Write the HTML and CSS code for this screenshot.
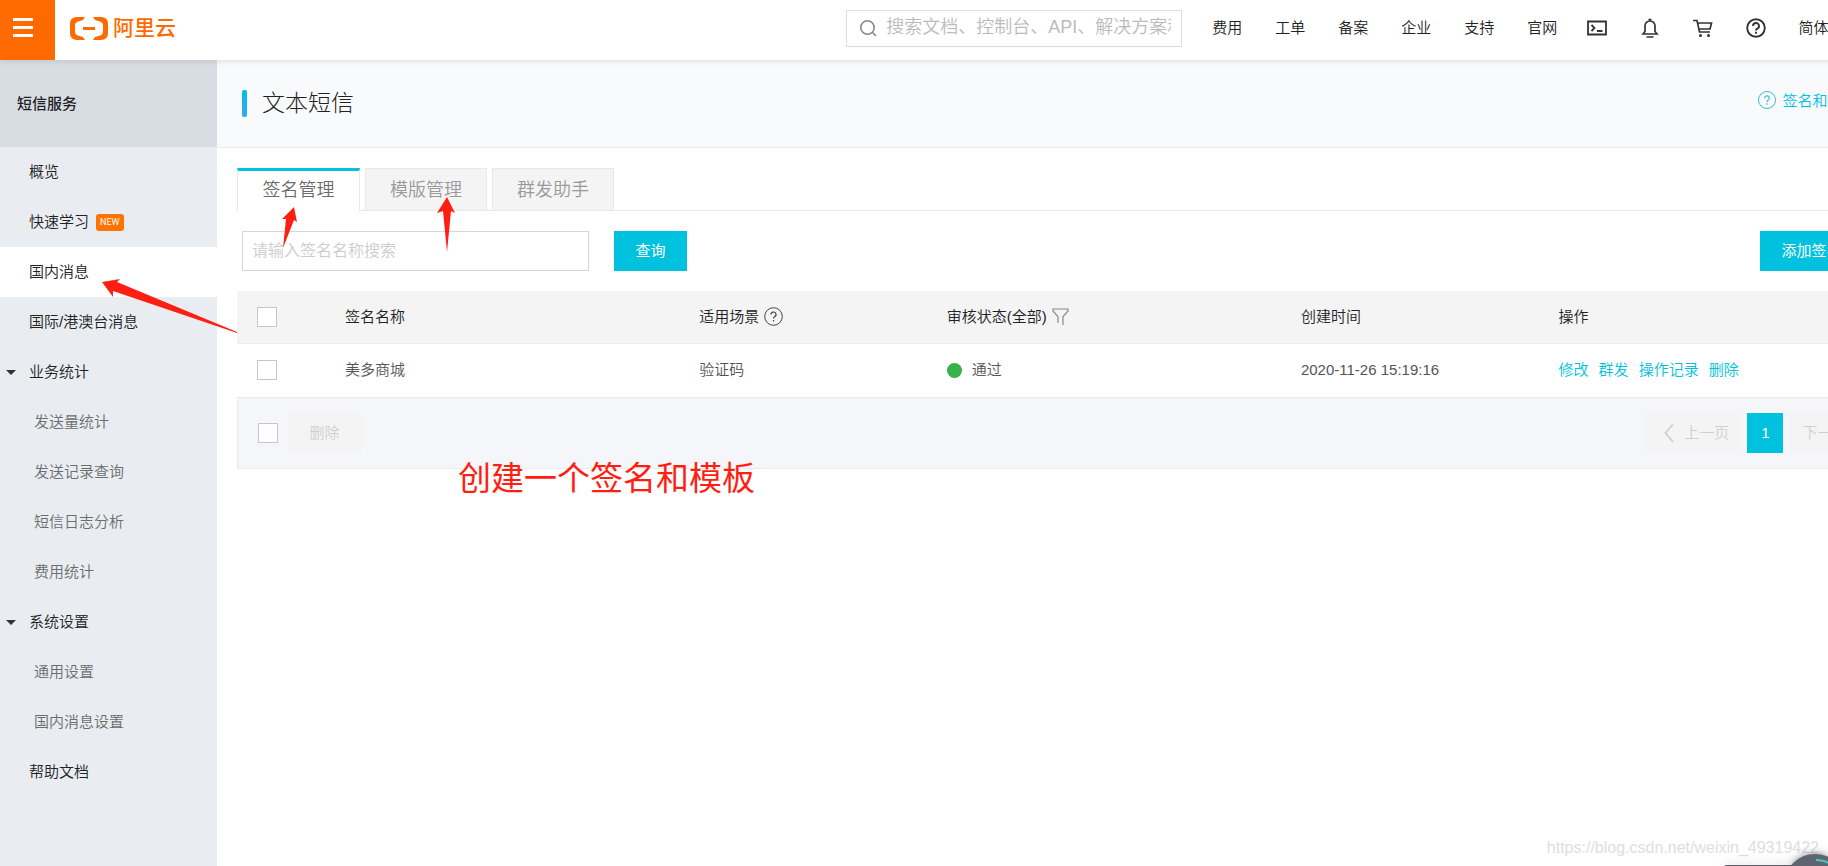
FILE: index.html
```html
<!DOCTYPE html>
<html lang="zh-CN">
<head>
<meta charset="utf-8">
<title>文本短信</title>
<link rel="stylesheet" href="styles.css">
</head>
<body>
<div class="page">
  <header class="topbar">
    <button class="menu-btn" aria-label="菜单"><svg width="20" height="20" viewBox="0 0 20 20"><path d="M0 1.500h20M0 9.500h20M0 17.500h20" stroke="#fff" stroke-width="3"/></svg></button>
    <a class="logo" href="#">
      <svg width="38" height="23" viewBox="0 0 38 23" fill="#ff6a00"><path d="M15 0H7Q0 0 0 7v9q0 7 7 7h8l-2-3-5-1.500q-3-1-3-4V8.500q0-3 3-4L13 3zM23 0h8q7 0 7 7v9q0 7-7 7h-8l2-3 5-1.500q3-1 3-4V8.500q0-3-3-4L25 3zM13 10h12v3H13z"/></svg>
      <span>阿里云</span>
    </a>
    <label class="top-search">
      <svg width="17" height="17" viewBox="0 0 17 17" fill="none" stroke="#888" stroke-width="1.600"><circle cx="7.500" cy="7.500" r="6.700"/><path d="M12 12l4 4"/></svg>
      <input type="text" aria-label="搜索" placeholder="搜索文档、控制台、API、解决方案和资源">
    </label>
    <nav class="top-nav">
      <a href="#">费用</a><a href="#">工单</a><a href="#">备案</a><a href="#">企业</a><a href="#">支持</a><a href="#">官网</a>
    </nav>
    <div class="top-icons">
      <button aria-label="命令行"><svg width="20" height="20" viewBox="0 0 20 20" fill="none" stroke="#333" stroke-width="1.800"><path d="M1 3.500h18v13H1zM4.500 7l3 3-3 3M10 13h5.500"/></svg></button>
      <button aria-label="消息"><svg width="20" height="20" viewBox="0 0 20 20" fill="none" stroke="#333" stroke-width="1.700"><path d="M3 16l2-2.500V8a5 5 0 0 1 10 0v5.500L17 16zM8.500 1.500h3M6.500 19h7"/></svg></button>
      <button aria-label="购物车"><svg width="20" height="20" viewBox="0 0 20 20" fill="none" stroke="#333" stroke-width="1.700"><path d="M0 2.500h4L6.500 14H17M4.500 5h14L17 11H6"/><circle cx="7.500" cy="17.500" r="1.500" fill="#333" stroke="none"/><circle cx="15.500" cy="17.500" r="1.500" fill="#333" stroke="none"/></svg></button>
      <button aria-label="帮助"><svg width="20" height="20" viewBox="0 0 20 20" fill="none" stroke="#333" stroke-width="1.900"><circle cx="10" cy="10" r="8.800"/><path d="M7 8a3 3 0 1 1 4.300 2.700Q10 11.300 10 12.500M10 13.800v2"/></svg></button>
    </div>
    <a class="lang" href="#">简体</a>
  </header>

  <div class="body">
    <aside class="sidebar">
      <h2 class="side-title">短信服务</h2>
      <nav class="side-nav">
        <a href="#">概览</a>
        <a href="#">快速学习<span class="new">NEW</span></a>
        <a href="#" class="active">国内消息</a>
        <a href="#">国际/港澳台消息</a>
        <a href="#" class="group">业务统计</a>
        <a href="#" class="sub">发送量统计</a>
        <a href="#" class="sub">发送记录查询</a>
        <a href="#" class="sub">短信日志分析</a>
        <a href="#" class="sub">费用统计</a>
        <a href="#" class="group">系统设置</a>
        <a href="#" class="sub">通用设置</a>
        <a href="#" class="sub">国内消息设置</a>
        <a href="#">帮助文档</a>
      </nav>
    </aside>

    <main class="main">
      <div class="title-bar">
        <h1>文本短信</h1>
        <a class="help-link" href="#"><svg width="18" height="18" viewBox="0 0 18 18" fill="none" stroke="#3bb9dc"><circle cx="9" cy="9" r="8.500"/><path d="M6.700 7.300a2.300 2.300 0 1 1 3.300 2Q9 9.900 9 11M9 12.300v1.500" stroke-width="1.200"/></svg>签名和模板规范</a>
      </div>
      <div class="content">
        <div class="tabs" role="tablist">
          <button class="tab on" role="tab" aria-selected="true">签名管理</button>
          <button class="tab" role="tab">模版管理</button>
          <button class="tab" role="tab">群发助手</button>
        </div>
        <div class="toolbar">
          <input class="name-input" type="text" aria-label="签名名称" placeholder="请输入签名名称搜索">
          <button class="btn">查询</button>
          <button class="btn add">添加签名</button>
        </div>
        <table class="list">
          <colgroup><col class="c-check"><col class="c-wide"><col class="c-scene"><col class="c-wide"><col class="c-time"><col></colgroup>
          <thead>
            <tr>
              <th><input type="checkbox" aria-label="全选"></th>
              <th>签名名称</th>
              <th><span class="cell">适用场景<svg width="19" height="19" viewBox="0 0 19 19" fill="none" stroke="#444"><circle cx="9.500" cy="9.500" r="8.800"/><path d="M7 7.500a2.500 2.500 0 1 1 3.500 2.300Q9.500 10.300 9.500 11.500M9.500 13v1.500" stroke-width="1.200"/></svg></span></th>
              <th><span class="cell">审核状态(全部)<svg width="17" height="17" viewBox="0 0 17 17" fill="none" stroke="#888" stroke-width="1.200"><path d="M6 15V8.500L1 3V1h15v2l-5 5.500V17"/></svg></span></th>
              <th>创建时间</th>
              <th>操作</th>
            </tr>
          </thead>
          <tbody>
            <tr>
              <td><input type="checkbox" aria-label="选择美多商城"></td>
              <td>美多商城</td>
              <td>验证码</td>
              <td><span class="status">通过</span></td>
              <td>2020-11-26 15:19:16</td>
              <td><span class="ops"><a href="#">修改</a><a href="#">群发</a><a href="#">操作记录</a><a href="#">删除</a></span></td>
            </tr>
          </tbody>
        </table>
        <div class="list-foot">
          <input type="checkbox" aria-label="全选本页">
          <button class="btn off" disabled>删除</button>
          <div class="pager">
            <button class="btn off prev" disabled><svg width="10" height="20" viewBox="0 0 10 20" fill="none" stroke="#d0d0d0" stroke-width="1.800"><path d="M9 1L1.500 10 9 19"/></svg>上一页</button>
            <button class="btn num">1</button>
            <button class="btn off next" disabled>下一页</button>
          </div>
        </div>
      </div>
    </main>
  </div>
</div>

<p class="note">创建一个签名和模板</p>
<svg class="arrows" width="480" height="340" viewBox="0 0 480 340" fill="#ff1f12"><path d="M294 207l3 15-3-2-11 28 3-29h-4zM447 197l8 16-4-2-4 41-4-41-6 2zM102 282l18-3-3 3 120 50v1l-124-42v6z"/></svg>
<div class="watermark">https://blog.csdn.net/weixin_49319422</div>
<svg class="widget" width="128" height="26" viewBox="0 0 128 26"><rect x="22" y="25" width="90" height="20" rx="5" fill="#5a5f6b"/><circle cx="115" cy="45" r="31" fill="#5f6470"/><path d="M116 20q7 0 12 3" fill="none" stroke="#3fd0c4" stroke-width="2"/></svg>
</body>
</html>
```
FILE: styles.css
```css
* { box-sizing: border-box; }
html { height: 100%; overflow: hidden; }
body {
  position: relative;
  height: 100%;
  margin: 0;
  overflow: hidden;
  background: #fff;
  color: #222;
  font-family: "Liberation Sans", "Noto Sans CJK SC", sans-serif;
  font-size: 15px;
  font-weight: 350;
  line-height: 20px;
}
a { color: inherit; text-decoration: none; }
button, input { font: inherit; }
button { margin: 0; padding: 0; border: 0; background: none; color: inherit; }
svg { display: block; flex: none; }

.page { display: flex; flex-direction: column; min-width: 105%; min-height: 100%; }

.topbar {
  position: relative;
  display: flex;
  align-items: center;
  height: 60px;
  background: #fff;
  box-shadow: 0 1px 6px rgba(0, 0, 0, .12);
}
.menu-btn { width: 55px; height: 60px; padding: 0 0 4px 13px; background: #ff6a00; }
.logo { display: flex; align-items: center; gap: 5px; margin: 0 auto 4px 15px; color: #ff6a00; font-size: 21px; font-weight: 500; }
.top-search {
  display: flex;
  align-items: center;
  gap: 9px;
  width: 336px;
  height: 37px;
  margin-bottom: 4px;
  padding: 0 10px 0 13px;
  border: 1px solid #ddd;
}
.top-search input { flex: 1; min-width: 0; padding: 0 0 2px; border: 0; outline: 0; font-size: 18px; }
.top-search input::placeholder { color: #bbb; opacity: 1; }
.top-nav { display: flex; gap: 33px; margin: 0 30px 4px 30px; }
.top-icons { display: flex; gap: 33px; margin-bottom: 4px; }
.lang { margin: 0 91px 4px 32px; }

.body { display: flex; flex: 1; }
.sidebar { flex: none; width: 217px; background: #e9edf2; }
.side-title { display: flex; align-items: center; height: 87px; margin: 0; padding-left: 17px; background: #d8dde4; font-size: 15px; font-weight: 500; }
.side-nav { display: flex; flex-direction: column; }
.side-nav a { display: flex; align-items: center; height: 50px; padding-left: 29px; }
.side-nav .active { background: #fff; }
.side-nav .sub { padding-left: 34px; color: #6c6c6c; }
.side-nav .group { gap: 13px; padding-left: 6px; }
.side-nav .group::before { content: ""; border: 5px solid transparent; border-top-color: #333; border-bottom: 0; }
.new { margin-left: 7px; padding: 0 4px; border-radius: 3px; background: #ff7300; color: #fff; font: 9px/17px Roboto, sans-serif; }

.main { flex: 1; min-width: 0; }
.title-bar { display: flex; align-items: center; height: 88px; padding: 0 32px 0 25px; border-bottom: 1px solid #e8eaec; background: #f9fafc; }
.title-bar h1 { display: flex; align-items: center; gap: 15px; margin: 0 auto 0 0; font-size: 23px; font-weight: 300; line-height: 27px; }
.title-bar h1::before { content: ""; width: 5px; height: 27px; border-radius: 2px; background: linear-gradient(#00c1de, #35a7f5); }
.help-link { display: flex; gap: 6px; margin-bottom: 6px; color: #00c1de; }

.content { padding: 20px 20px 0; }
.tabs { display: flex; gap: 5px; border-bottom: 1px solid #e8e8e8; }
.tab { width: 122px; height: 42px; border: 1px solid #e8e8e8; border-bottom: 0; background: #f4f4f4; color: #999; font-size: 18px; }
.tab.on { width: 123px; height: 43px; margin-bottom: -1px; padding-bottom: 2px; border-top: 3px solid #00c1de; background: #fff; color: #6c6c6c; }
.toolbar { display: flex; gap: 25px; padding: 20px 37px 20px 5px; }
.name-input { width: 347px; height: 40px; padding: 0 9px; border: 1px solid #d4d6d9; outline: 0; font-size: 16px; }
.name-input::placeholder { color: #ccc; opacity: 1; }
.btn { min-width: 73px; height: 40px; padding: 0 21px; background: #00c1de; color: #fff; font-weight: 400; }
.add { margin-left: auto; }

.list { width: 100%; border-collapse: collapse; table-layout: fixed; }
.c-check { width: 5.3%; }
.c-wide { width: 21.3%; }
.c-scene { width: 14.9%; }
.c-time { width: 15.5%; }
.list th, .list td { height: 54px; padding: 0 20px; border-bottom: 1px solid #e8eaec; text-align: left; font-weight: 350; }
.list th { height: 52px; background: #f4f4f4; }
.list td { color: #555; }
.cell { display: flex; align-items: center; gap: 5px; }
.status { display: flex; align-items: center; gap: 10px; }
.status::before { content: ""; width: 15px; height: 15px; border-radius: 50%; background: #35b34a; }
.ops { display: flex; gap: 10px; color: #00c1de; }
input[type="checkbox"] { display: block; width: 20px; height: 20px; margin: 0; appearance: none; border: 1px solid #c4c6cf; background: #fff; }

.list-foot { display: flex; align-items: center; gap: 10px; height: 71px; padding: 0 32px 0 20px; border: 1px solid #e8eaec; border-top: 0; background: #f4f6fa; }
.btn.off { background: #f4f4f4; color: #d0d0d0; font-weight: 350; }
.pager { display: flex; gap: 6px; margin-left: auto; }
.btn.prev { display: flex; align-items: center; gap: 10px; padding: 0 12px 0 19px; }
.btn.num { min-width: 36px; padding: 0; }
.btn.next { padding: 0 19px 0 13px; }

.note { position: absolute; left: 458px; top: 459px; margin: 0; color: #ff1f12; font-size: 33px; font-weight: 400; line-height: 40px; }
.arrows { position: absolute; left: 0; top: 0; pointer-events: none; }
.watermark { position: absolute; right: 9px; bottom: 8px; color: #dedede; font-size: 16px; }
.widget { position: absolute; right: 0; bottom: 0; filter: drop-shadow(0 0 4px rgba(0, 0, 0, .5)); }
```
